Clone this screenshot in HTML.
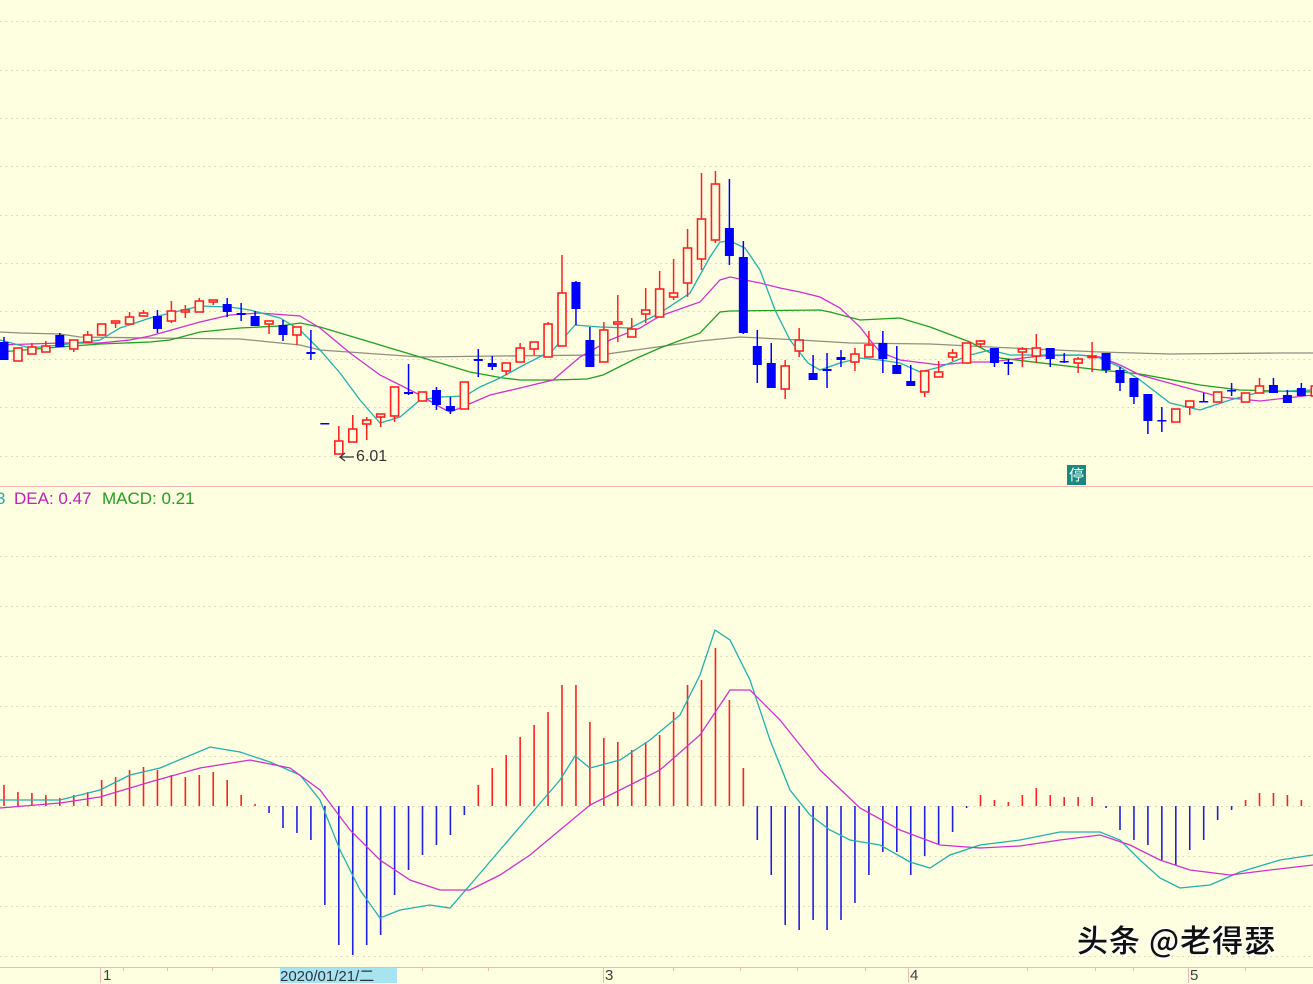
<!DOCTYPE html>
<html><head><meta charset="utf-8">
<style>
html,body{margin:0;padding:0;background:#fefee0;}
body{width:1313px;height:983px;overflow:hidden;position:relative;font-family:"Liberation Sans","Noto Sans CJK SC",sans-serif;}
svg{position:absolute;left:0;top:0;}
.lg{position:absolute;top:489px;font-size:17px;white-space:nowrap;}
.ax{position:absolute;top:967px;font-size:15px;color:#404040;}
.wm{position:absolute;left:1077px;top:916px;font-size:31px;font-family:"Noto Sans CJK SC","WenQuanYi Zen Hei",sans-serif;font-weight:500;color:#111;text-shadow:2px 2px 0 #fff,-1px -1px 0 #fff;letter-spacing:1px;}
</style></head><body>
<svg id="s" width="1313" height="983" xmlns="http://www.w3.org/2000/svg"></svg>
<div class="lg" style="left:-4px;color:#20b0b0">3</div>
<div class="lg" style="left:14px;color:#c020c0">DEA: 0.47</div>
<div class="lg" style="left:102px;color:#20a020">MACD: 0.21</div>
<div class="ax" style="left:103px">1</div>
<div class="ax" style="left:280px;top:968px;width:117px;height:15px;background:#a8e4f0;color:#303040;font-size:15px;line-height:17px;overflow:hidden">2020/01/21/二</div>
<div class="ax" style="left:605px">3</div>
<div class="ax" style="left:910px">4</div>
<div class="ax" style="left:1190px">5</div>
<div style="position:absolute;left:356px;top:448px;font-size:16px;color:#333">6.01</div>
<div style="position:absolute;left:1067px;top:465px;width:19px;height:20px;background:#1a8a80;color:#fff;font-size:15px;line-height:20px;text-align:center;font-family:'Noto Sans CJK SC',sans-serif">停</div>
<div class="wm">头条 @老得瑟</div>
<script>
var s=document.getElementById('s'),h='';
function X(i){return 4+13.95*i;}
[21,70,118,166,215,263,311,359,407,456,556,606,656,706,756,806,856,906,956].forEach(function(y){
h+='<line x1="0" y1="'+y+'.5" x2="1313" y2="'+y+'.5" stroke="#d6d2b0" stroke-dasharray="1.5,4"/>';});
h+='<line x1="0" y1="486.5" x2="1313" y2="486.5" stroke="#f0b8b0"/>';
h+='<line x1="0" y1="967.5" x2="1313" y2="967.5" stroke="#f0b8b0"/>';
[100,603,908,1188].forEach(function(x){h+='<line x1="'+x+'.5" y1="967" x2="'+x+'.5" y2="983" stroke="#f0b8b0"/>';});
[123,167,212,367,422,488,673,740,797,865,1027,1095,1133,1245].forEach(function(x){h+='<line x1="'+x+'.5" y1="967" x2="'+x+'.5" y2="971" stroke="#f0b8b0"/>';});
function pl(pts,c){var p='';for(var k=0;k<pts.length;k+=2)p+=pts[k]+','+pts[k+1]+' ';h+='<polyline points="'+p+'" fill="none" stroke="'+c+'" stroke-width="1.3"/>';}
pl([0,332,20,333,60,334,80,337,150,338,240,339,280,343,300,345,320,350,420,357,500,356,600,355,650,348,700,341,740,337,800,340,850,343,930,344,990,347,1100,352,1170,354,1280,353,1313,353],'#908e80');
pl([0,352,60,347,100,344,150,342,170,340,200,332,240,328,280,326,300,323,320,327,420,357,470,372,503,378,520,380,553,380,587,379,603,375,637,358,660,348,700,333,720,312,730,311,820,310,830,312,860,320,900,318,930,327,970,342,1000,358,1100,370,1140,374,1200,385,1240,390,1313,392],'#20a020');
pl([0,345,60,343,100,343,130,340,150,336,200,322,230,315,260,313,300,316,320,328,350,353,380,375,420,395,440,407,450,412,460,408,490,395,520,388,553,380,580,357,610,340,640,328,660,316,700,302,720,280,730,277,760,283,780,288,800,292,820,297,840,308,860,327,870,340,880,352,900,360,940,365,970,362,990,362,1040,356,1080,355,1100,357,1120,365,1140,375,1180,386,1220,397,1260,401,1313,395],'#d030d0');
pl([0,340,30,348,60,345,100,340,120,328,150,318,200,306,230,307,250,310,280,318,300,330,320,350,340,373,360,400,380,423,400,417,420,400,440,397,465,396,480,387,500,378,520,367,553,350,575,325,600,327,630,328,650,318,660,313,690,293,710,257,720,242,730,241,745,248,760,270,775,310,790,340,808,363,820,370,840,363,860,358,880,360,900,363,920,372,940,367,970,355,990,350,1010,355,1040,355,1080,355,1100,358,1120,367,1140,380,1170,403,1200,410,1230,400,1260,392,1313,390],'#20b0b0');
var C=[[0,'b',342,360,337,360],[1,'r',348,361],[2,'r',347,354,343],[3,'r',346,352,341],[4,'b',335,347,333],[5,'r',340,349,340,352],[6,'r',335,342,331],[7,'r',324,335],[8,'r',321,323,321,328],[9,'r',317,324,312],[10,'r',313,316,310],[11,'b',316,329,310,333],[12,'r',311,321,301,323],[13,'r',310,312,305,318],[14,'r',301,312,298],[15,'r',300,302,300,305],[16,'b',304,312,298,317],[17,'b',313,315,303,321],[18,'b',316,326,311],[19,'r',321,324,321,334],[20,'b',325,335,320,341],[21,'r',327,335,327,345],[22,'b',352,354,330,360],[23,'b',423,424],
[24,'r',441,454,426],[25,'r',429,442,415],[26,'r',420,424,417,440],[27,'r',414,417,414,427],[28,'r',387,416,387,422],[29,'b',392,394,364,395],[30,'r',392,401],[31,'b',390,405,387,410],[32,'b',406,411,397,414],[33,'r',382,409],[34,'b',359,361,349,377],[35,'b',363,367,356,370],[36,'r',363,371,363,375],[37,'r',348,362,343],[38,'r',342,349,342,355],[39,'r',324,357,322],[40,'r',293,346,255],[41,'b',282,309,281,325],[42,'b',340,367,327],[43,'r',330,362,322],[44,'r',322,324,295,342],[45,'r',329,337,318],[46,'r',310,314,288,323],
[47,'r',289,317,271],[48,'r',293,297,259,300],[49,'r',248,283,229,297],[50,'r',219,259,173,270],[51,'r',184,240,171,243],[52,'b',228,256,179,265],[53,'b',257,333,241,334],[54,'b',346,365,330,383],[55,'b',363,388,343],[56,'r',366,389,360,399],[57,'r',340,351,328,357],[58,'b',373,380,355],[59,'b',369,371,353,388],[60,'b',357,360,350,367],[61,'r',354,362,348,371],[62,'r',345,357,331],[63,'b',343,359,331,373],[64,'b',365,374,346],[65,'b',381,386,365],[66,'r',371,392,371,397],[67,'r',372,377,361],[68,'r',353,357,349,361],[69,'r',343,363],
[70,'r',341,344,340,347],[71,'b',348,363,348,367],[72,'b',362,364,359,375],[73,'r',349,352,347,367],[74,'r',348,356,334,363],[75,'b',348,359,348,367],[76,'b',361,362,353,363],[77,'r',359,363,357,373],[78,'r',356,357,342,372],[79,'b',353,370,353,373],[80,'b',370,383,367,391],[81,'b',378,397,378,404],[82,'b',394,421,394,434],[83,'b',420,421,407,432],[84,'r',409,422],[85,'r',401,407,401,415],[86,'b',401,402,393,402],[87,'r',392,402],[88,'b',390,391,383,396],[89,'r',393,402],[90,'r',386,393,378],[91,'b',385,393,378],[92,'b',395,403,390],[93,'b',388,396,383],[94,'r',386,396]];
C.forEach(function(c){var x=X(c[0]),t=c[2],b=c[3],hi=c[4]||t,lo=c[5]||b,col=c[1]=='r'?'#ff2020':'#0000ff';
h+='<line x1="'+x+'" y1="'+hi+'" x2="'+x+'" y2="'+lo+'" stroke="'+col+'" stroke-width="1.5"/>';
var bh=Math.max(b-t,1.5);
if(c[1]=='r')h+='<rect x="'+(x-4)+'" y="'+t+'" width="8" height="'+bh+'" fill="#fefee0" stroke="'+col+'" stroke-width="1.6"/>';
else h+='<rect x="'+(x-4.5)+'" y="'+t+'" width="9" height="'+bh+'" fill="'+col+'"/>';});
h+='<polyline points="354,457 340,457 345,453 340,457 345,461" fill="none" stroke="#333" stroke-width="1.2"/>';
var M=[785,792,793,795,798,795,792,780,777,770,767,770,775,777,775,772,780,795,804,813,828,833,840,905,945,955,945,935,895,870,855,845,835,815,785,768,755,737,725,712,685,685,722,738,742,750,742,735,712,685,680,648,700,768,840,875,925,930,920,930,920,903,875,852,852,875,856,845,832,808,795,800,802,795,788,795,797,797,797,808,830,840,845,860,865,850,840,820,810,800,793,793,795,800];
M.forEach(function(v,i){var x=X(i);h+='<line x1="'+x+'" y1="806" x2="'+x+'" y2="'+v+'" stroke="'+(v<806?'#ff2020':'#2020e0')+'" stroke-width="1.6"/>';});
pl([0,800,60,800,100,790,130,775,160,768,210,747,240,752,270,762,300,775,320,800,340,850,360,890,380,918,400,910,430,905,450,908,470,885,500,850,530,815,560,780,575,756,590,768,620,760,650,740,680,715,700,675,715,630,730,640,750,680,770,740,790,790,810,815,830,830,850,840,880,845,910,862,930,868,950,855,980,845,1020,840,1060,832,1100,832,1120,840,1140,860,1160,878,1180,888,1210,885,1240,872,1280,860,1313,855],'#20b0b0');
pl([0,808,60,803,100,797,150,782,200,768,250,760,290,768,320,790,350,830,380,860,410,880,440,890,470,890,500,875,530,855,560,830,590,805,620,790,660,770,700,735,730,690,750,690,780,720,820,770,860,808,900,830,940,845,980,848,1020,846,1060,840,1100,835,1130,845,1160,860,1190,870,1230,875,1270,870,1313,865],'#d030d0');
s.innerHTML=h;
</script>
</body></html>
